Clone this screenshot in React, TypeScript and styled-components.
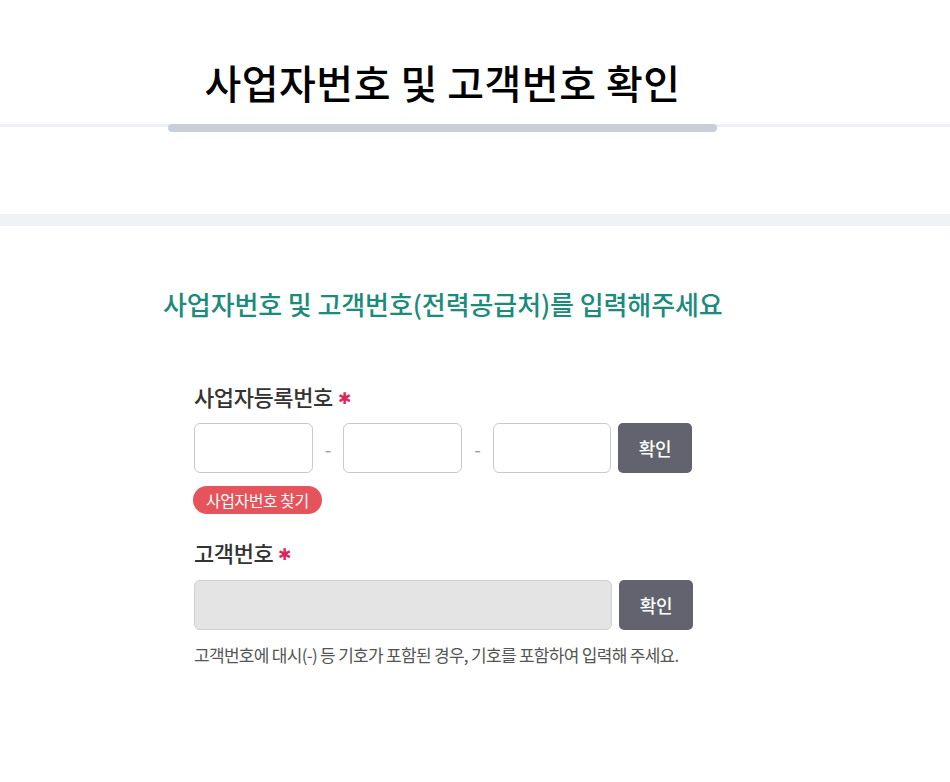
import React, { FC } from 'react';
import styled, { createGlobalStyle } from 'styled-components';

const GlobalStyle = createGlobalStyle`
    html, body {
        margin: 0;
        padding: 0;
        background: #fff;
    }
    body {
        font-family: "Noto Sans CJK KR", "Noto Sans", sans-serif;
        color: #333;
    }
`;

// ---------------- Header ---------------------
const Header = styled.header`
    width: 549px;
    height: 124px;
    margin-left: 168px;
    padding-top: 58px;
    box-sizing: border-box;
`;

const Title = styled.h1`
    margin: 0;
    text-align: center;
    font-size: 40px;
    line-height: 48px;
    font-weight: 500;
    letter-spacing: 0.5px;
    color: #000;
`;

const RuleRow = styled.div`
    height: 8px;
    background: linear-gradient(#eef0f5 0 3px, transparent 3px);
`;

const RuleBar = styled.div`
    width: 549px;
    height: 8px;
    margin-left: 168px;
    border-radius: 4px;
    background: #c8cfda;
`;

const Band = styled.div`
    height: 12px;
    margin-top: 82px;
    background: #eff2f7;
`;

// ---------------- Form ---------------------
const Section = styled.section`
    padding-left: 163px;
    padding-top: 61px;
`;

const Heading = styled.h2`
    margin: 0;
    font-size: 26px;
    line-height: 34px;
    font-weight: 500;
    letter-spacing: -0.1px;
    color: #1b8b7b;
`;

const Form = styled.div`
    padding-left: 31px;
    padding-top: 61px;
    display: flex;
    flex-direction: column;
    align-items: flex-start;
`;

const Label = styled.div<{ $top?: number }>`
    margin-top: ${(p) => p.$top ?? 0}px;
    display: flex;
    align-items: center;
    gap: 5px;
    font-size: 22px;
    line-height: 28px;
    font-weight: 500;
    letter-spacing: -0.4px;
    color: #333;
`;

const Required = styled.span`
    color: #e0245e;
    font-size: 16px;
    line-height: 1;
    letter-spacing: 0;
    margin-top: 2px;
`;

const InputRow = styled.div<{ $top: number }>`
    margin-top: ${(p) => p.$top}px;
    display: flex;
    align-items: center;
`;

const Field = styled.input<{ $w: number; $disabled?: boolean }>`
    width: ${(p) => p.$w}px;
    height: 50px;
    box-sizing: border-box;
    border: 1px solid ${(p) => (p.$disabled ? '#cfcfcf' : '#c9c9c9')};
    border-radius: 6px;
    background: ${(p) => (p.$disabled ? '#e4e4e4' : '#fff')};
    padding: 0 12px;
    font-family: inherit;
    font-size: 16px;
    outline: none;
`;

const Dash = styled.span<{ $w: number }>`
    width: ${(p) => p.$w}px;
    text-align: center;
    color: #999;
    font-size: 19px;
`;

const ConfirmButton = styled.button`
    margin-left: 7px;
    width: 74px;
    height: 50px;
    border: 0;
    border-radius: 5px;
    background: #63636f;
    color: #fff;
    font-family: inherit;
    font-size: 18px;
    font-weight: 500;
    letter-spacing: -0.3px;
    cursor: pointer;
`;

const FindPill = styled.button`
    margin-top: 13px;
    margin-left: -1px;
    height: 28px;
    padding: 0 13px;
    border: 0;
    border-radius: 14px;
    background: #e5535b;
    color: #fff;
    font-family: inherit;
    font-size: 16px;
    font-weight: 400;
    letter-spacing: -0.5px;
    line-height: 28px;
    cursor: pointer;
`;

const Note = styled.p`
    margin: 14px 0 0;
    font-size: 17px;
    line-height: 22px;
    letter-spacing: -0.7px;
    color: #555;
`;

type Props = {}

const App: FC<Props> = (props: Props) => {
    return (
        <>
            <GlobalStyle />
            <Header>
                <Title>사업자번호 및 고객번호 확인</Title>
            </Header>
            <RuleRow>
                <RuleBar />
            </RuleRow>
            <Band />
            <Section>
                <Heading>사업자번호 및 고객번호(전력공급처)를 입력해주세요</Heading>
                <Form>
                    <Label>사업자등록번호<Required>✱</Required></Label>
                    <InputRow $top={13}>
                        <Field $w={119} />
                        <Dash $w={30}>-</Dash>
                        <Field $w={119} />
                        <Dash $w={31}>-</Dash>
                        <Field $w={118} />
                        <ConfirmButton>확인</ConfirmButton>
                    </InputRow>
                    <FindPill>사업자번호 찾기</FindPill>
                    <Label $top={24}>고객번호<Required>✱</Required></Label>
                    <InputRow $top={14}>
                        <Field $w={418} $disabled disabled />
                        <ConfirmButton>확인</ConfirmButton>
                    </InputRow>
                    <Note>고객번호에 대시(-) 등 기호가 포함된 경우, 기호를 포함하여 입력해 주세요.</Note>
                </Form>
            </Section>
        </>
    );
}
export default App;
